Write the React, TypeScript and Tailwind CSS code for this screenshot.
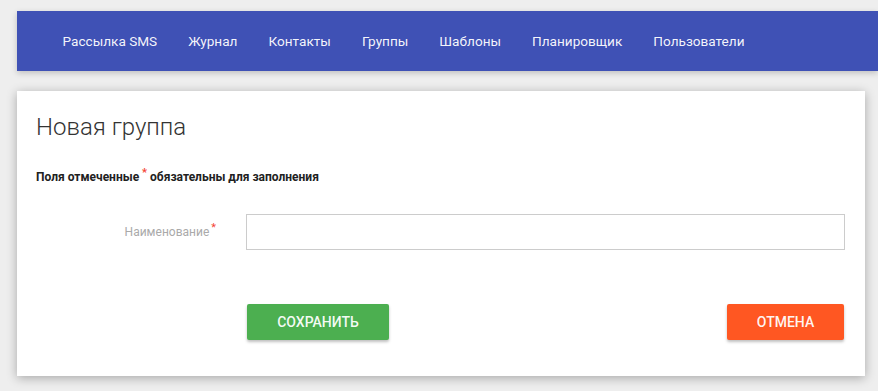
const NAV = ["Рассылка SMS", "Журнал", "Контакты", "Группы", "Шаблоны", "Планировщик", "Пользователи"];

export default function App() {
  return (
    <div className="min-h-[391px] bg-[#eeeeee] pt-[11px] font-['Roboto',sans-serif] overflow-hidden">
      <nav className="ml-[17px] flex h-[60px] items-center bg-[#3f51b5] pl-[30px] shadow-[0_2px_6px_rgba(0,0,0,0.2)]">
        {NAV.map((n) => (
          <a key={n} className="px-[15.5px] text-[13.6px] text-white/95 whitespace-nowrap">
            {n}
          </a>
        ))}
      </nav>

      <div className="ml-[17px] mt-[20px] w-[848px] bg-white pl-[19px] pr-[20px] pt-[21px] pb-[36px] shadow-[0_2px_10px_rgba(0,0,0,0.3)]">
        <h1 className="text-[24px] leading-[30px] font-light text-[#333]">Новая группа</h1>
        <p className="mt-[27px] text-[12px] leading-[16px] font-bold text-[#212121]">
          Поля отмеченные <sup className="text-[#f44336] text-[11px]">*</sup> обязательны для заполнения
        </p>

        <div className="mt-[29px] flex items-center gap-[30px]">
          <label className="w-[180px] text-right text-[12px] text-[#aaaaaa]">
            Наименование<sup className="ml-[2px] text-[11px] text-[#f44336]">*</sup>
          </label>
          <input className="h-[36px] flex-1 border border-[#cccccc] px-2 text-sm outline-none" />
        </div>

        <div className="mt-[54px] flex justify-between pl-[211px] pr-px">
          <button className="h-[36px] w-[142px] rounded-[2px] bg-[#4caf50] text-[14px] font-medium uppercase text-white/95 shadow-[0_2px_3px_rgba(0,0,0,0.25)]">
            Сохранить
          </button>
          <button className="h-[36px] w-[117px] rounded-[2px] bg-[#ff5722] text-[14px] font-medium uppercase text-white/95 shadow-[0_2px_3px_rgba(0,0,0,0.25)]">
            Отмена
          </button>
        </div>
      </div>
    </div>
  );
}
